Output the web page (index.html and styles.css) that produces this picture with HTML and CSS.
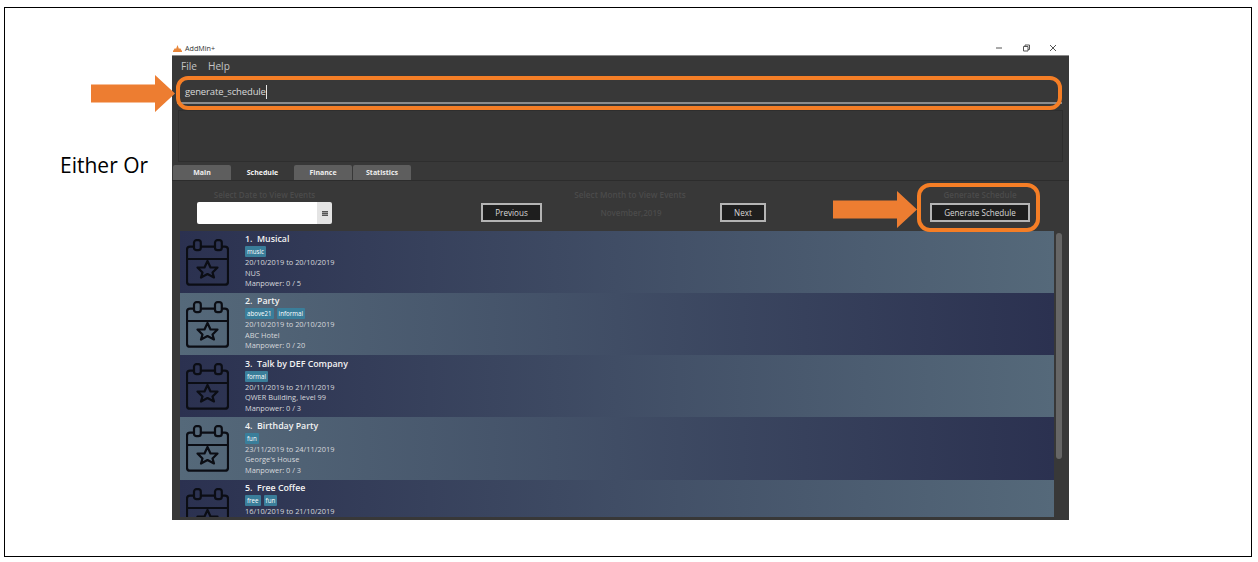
FILE: index.html
```html
<!DOCTYPE html>
<html lang="en">
<head>
<meta charset="utf-8">
<title>AddMin+</title>
<link rel="stylesheet" href="styles.css">
</head>
<body>
<svg width="0" height="0" class="defs">
  <symbol id="cal" viewBox="0 0 43 47">
    <path d="M8 7.700H4Q1 7.700 1 10.700V42.700Q1 45.700 4 45.700H39Q42 45.700 42 42.700V10.700Q42 7.700 39 7.700H36M15 7.700H29M1 20H42" fill="none" stroke="#0b0d14" stroke-width="2.200"/>
    <rect x="8" y="1.200" width="6.800" height="10" rx="2.500" fill="none" stroke="#0b0d14" stroke-width="2.200"/>
    <rect x="29" y="1.200" width="6.800" height="10" rx="2.500" fill="none" stroke="#0b0d14" stroke-width="2.200"/>
    <path d="M21.500 22L24.500 28.500H31.500L26.500 33.500L28 38.500L21.500 35L15 38.500L16.500 33.500L11.500 28.500H18.500Z" fill="none" stroke="#0b0d14" stroke-width="2.200" stroke-linejoin="round"/>
  </symbol>
</svg>
<main class="slide">
  <section class="window">
    <header class="titlebar">
      <div class="brand">
        <svg class="logo" width="9" height="7" viewBox="0 0 9 7"><path d="M0 6L2 3L3 4L4.500 0L6 4L7 3L9 6V7H0Z" fill="#e8863a"/></svg>
        <span>AddMin+</span>
      </div>
      <div class="controls">
        <svg width="8" height="8" viewBox="0 0 8 8"><path d="M1 4H7" stroke="#555" fill="none"/></svg>
        <svg width="8" height="8" viewBox="0 0 8 8"><path d="M1.500 2.500H6V7H1.500ZM3 2.500V1H7.500V5.500H6" stroke="#555" fill="none"/></svg>
        <svg width="8" height="8" viewBox="0 0 8 8"><path d="M1 1L7 7M7 1L1 7" stroke="#555" fill="none"/></svg>
      </div>
    </header>
    <nav class="menu"><span>File</span><span>Help</span></nav>
    <div class="command"><span class="typed">generate_schedule</span></div>
    <div class="results"></div>
    <div class="tabs">
      <span class="tab">Main</span>
      <span class="tab active">Schedule</span>
      <span class="tab">Finance</span>
      <span class="tab">Statistics</span>
    </div>
    <div class="toolbar">
      <div class="group date-group">
        <span class="faint">Select Date to View Events</span>
        <div class="picker"><span class="picker-field"></span><span class="picker-btn"><i></i></span></div>
      </div>
      <div class="group month-group">
        <span class="faint month-title">Select Month to View Events</span>
        <div class="month-row">
          <button class="btn prev">Previous</button>
          <span class="faint month">November,2019</span>
          <button class="btn next">Next</button>
        </div>
      </div>
      <div class="group gen-group">
        <span class="faint">Generate Schedule</span>
        <button class="btn gen">Generate Schedule</button>
      </div>
    </div>
    <div class="list-wrap">
      <div class="list">
        <article class="row odd">
          <svg class="cal"><use href="#cal"/></svg>
          <div class="info">
            <h3>1.&nbsp; Musical</h3>
            <div class="tags"><span>music</span></div>
            <p>20/10/2019 to 20/10/2019</p><p>NUS</p><p>Manpower: 0 / 5</p>
          </div>
        </article>
        <article class="row even">
          <svg class="cal"><use href="#cal"/></svg>
          <div class="info">
            <h3>2.&nbsp; Party</h3>
            <div class="tags"><span>above21</span><span>informal</span></div>
            <p>20/10/2019 to 20/10/2019</p><p>ABC Hotel</p><p>Manpower: 0 / 20</p>
          </div>
        </article>
        <article class="row odd">
          <svg class="cal"><use href="#cal"/></svg>
          <div class="info">
            <h3>3.&nbsp; Talk by DEF Company</h3>
            <div class="tags"><span>formal</span></div>
            <p>20/11/2019 to 21/11/2019</p><p>QWER Building, level 99</p><p>Manpower: 0 / 3</p>
          </div>
        </article>
        <article class="row even">
          <svg class="cal"><use href="#cal"/></svg>
          <div class="info">
            <h3>4.&nbsp; Birthday Party</h3>
            <div class="tags"><span>fun</span></div>
            <p>23/11/2019 to 24/11/2019</p><p>George's House</p><p>Manpower: 0 / 3</p>
          </div>
        </article>
        <article class="row odd last">
          <svg class="cal"><use href="#cal"/></svg>
          <div class="info">
            <h3>5.&nbsp; Free Coffee</h3>
            <div class="tags"><span>free</span><span>fun</span></div>
            <p>16/10/2019 to 21/10/2019</p>
          </div>
        </article>
      </div>
      <div class="track"><div class="thumb"></div></div>
    </div>
  </section>

  <span class="either">Either Or</span>
  <svg class="arrow arrow-a" width="85" height="37" viewBox="0 0 85 37"><path d="M0 9.500H64V0L84 18.500L64 37V27.500H0Z" fill="#ed7d31"/></svg>
  <svg class="arrow arrow-b" width="85" height="37" viewBox="0 0 85 37"><path d="M0 9.500H64V0L84 18.500L64 37V27.500H0Z" fill="#ed7d31"/></svg>
  <div class="ring ring-a"></div>
  <div class="ring ring-b"></div>
</main>
</body>
</html>
```
FILE: styles.css
```css
* { box-sizing: border-box; }
html, body { margin: 0; padding: 0; background: #fff; }
body { width: 1258px; height: 562px; overflow: hidden; font-family: "Open Sans", "Noto Sans", sans-serif; }
.defs { position: absolute; }
.slide {
  position: relative;
  margin: 7px 0 0 4px;
  width: 1248px;
  height: 550px;
  border: 1px solid #000;
  padding: 33px 0 0 167px;
}
.window { width: 897px; height: 479px; display: flex; flex-direction: column; background: #383838; overflow: hidden; }
.titlebar { height: 15px; flex: none; background: #fff; border-bottom: 1px solid #8a8a8a; display: flex; justify-content: space-between; align-items: center; }
.brand { display: flex; align-items: center; gap: 3px; padding-left: 1px; font-size: 7.200px; color: #333; }
.controls { display: flex; gap: 19px; padding-right: 12px; }
.menu { height: 20px; flex: none; display: flex; gap: 11px; align-items: center; padding-left: 9px; font-size: 10.100px; color: #c4c4c4; }
.command {
  flex: none; height: 28px; margin: 0 7px 0 5px; padding: 6px 0 0 8px;
  border-bottom: 2px solid #8c8c8c;
  display: flex; align-items: center; font-size: 9.500px; letter-spacing: -0.15px; color: #d8d8d8;
}
.typed { border-right: 1px solid #e6e6e6; line-height: 14px; }
.results { flex: none; height: 52px; margin: 6px 6px 0 6px; border: 1px solid #2e2e2e; background: #363636; }
.tabs { flex: none; height: 16px; margin-top: 3px; display: flex; gap: 1px; border-bottom: 1px solid #2c2c2c; padding-left: 1px; }
.tab { width: 58px; height: 15px; background: #5e5e5e; color: #eee; font-size: 7px; font-weight: 700; display: flex; align-items: center; justify-content: center; border-radius: 2px 2px 0 0; }
.tab.active { background: #383838; color: #f4f4f4; width: 61px; }
.toolbar { flex: none; height: 49.500px; display: flex; }
.group { display: flex; flex-direction: column; align-items: center; }
.faint { font-size: 8px; color: #4b4b4b; font-weight: 600; line-height: 11px; }
.date-group { width: 135px; margin-left: 25px; padding-top: 8px; gap: 2px; }
.picker { display: flex; width: 135px; height: 22px; border-radius: 2px; overflow: hidden; }
.picker-field { flex: 1; background: #fff; }
.picker-btn { width: 15px; background: #e4e4e4; display: flex; align-items: center; justify-content: center; }
.picker-btn i { width: 6px; height: 5px; background: repeating-linear-gradient(#555 0 1px, #999 1px 2px); }
.month-group { width: 285px; margin-left: 149px; padding-top: 8px; gap: 3px; }
.month-title { margin-left: 13px; font-size: 8.200px; }
.month-row { width: 285px; display: flex; justify-content: space-between; align-items: center; }
.btn { height: 19px; background: #1e1e1e; border: 2px solid #b4b4b4; color: #d8d8d8; font: 8.100px "Open Sans", "Noto Sans", sans-serif; padding: 0; }
.prev { width: 61px; }
.next { width: 46px; }
.gen-group { width: 100px; margin-left: 164px; padding-top: 8px; gap: 3px; }
.gen { width: 100px; }
.list-wrap { flex: 1; min-height: 0; display: flex; padding-left: 8px; }
.list { width: 874px; height: 286.500px; overflow: hidden; }
.row { height: 62.300px; display: flex; padding-left: 6px; overflow: hidden; }
.odd { background: linear-gradient(90deg, #2b3150, #55697a); }
.even { background: linear-gradient(90deg, #55697a, #2b3150); }
.cal { width: 43px; height: 47px; flex: none; margin: 8px 16px 0 0; }
.info { padding-top: 2.500px; color: #e4e4e4; }
.info h3 { margin: 0; font-size: 8.800px; font-weight: 600; line-height: 12px; color: #f2f2f2; }
.info p { margin: 0; font-size: 7.400px; line-height: 10.500px; color: #d6d8dc; }
.tags { display: flex; gap: 3px; height: 11px; margin: 1px 0 0; }
.tags span { background: #3a7e9a; color: #fff; font-size: 6.200px; line-height: 11px; padding: 0 2px; border-radius: 1px; }
.track { width: 6px; margin-left: 2px; padding-top: 2.500px; }
.thumb { width: 6px; height: 226px; border-radius: 3px; background: #666; }
.either { position: absolute; left: 55px; top: 143px; font-size: 21px; line-height: 28px; color: #000; }
.arrow { position: absolute; }
.arrow-a { left: 86px; top: 67px; }
.arrow-b { left: 828px; top: 183px; }
.ring { position: absolute; border: 4px solid #f57e26; }
.ring-a { left: 171px; top: 68px; width: 886px; height: 34px; border-radius: 12px; }
.ring-b { left: 912px; top: 175px; width: 123px; height: 49px; border-radius: 13px; }
```
